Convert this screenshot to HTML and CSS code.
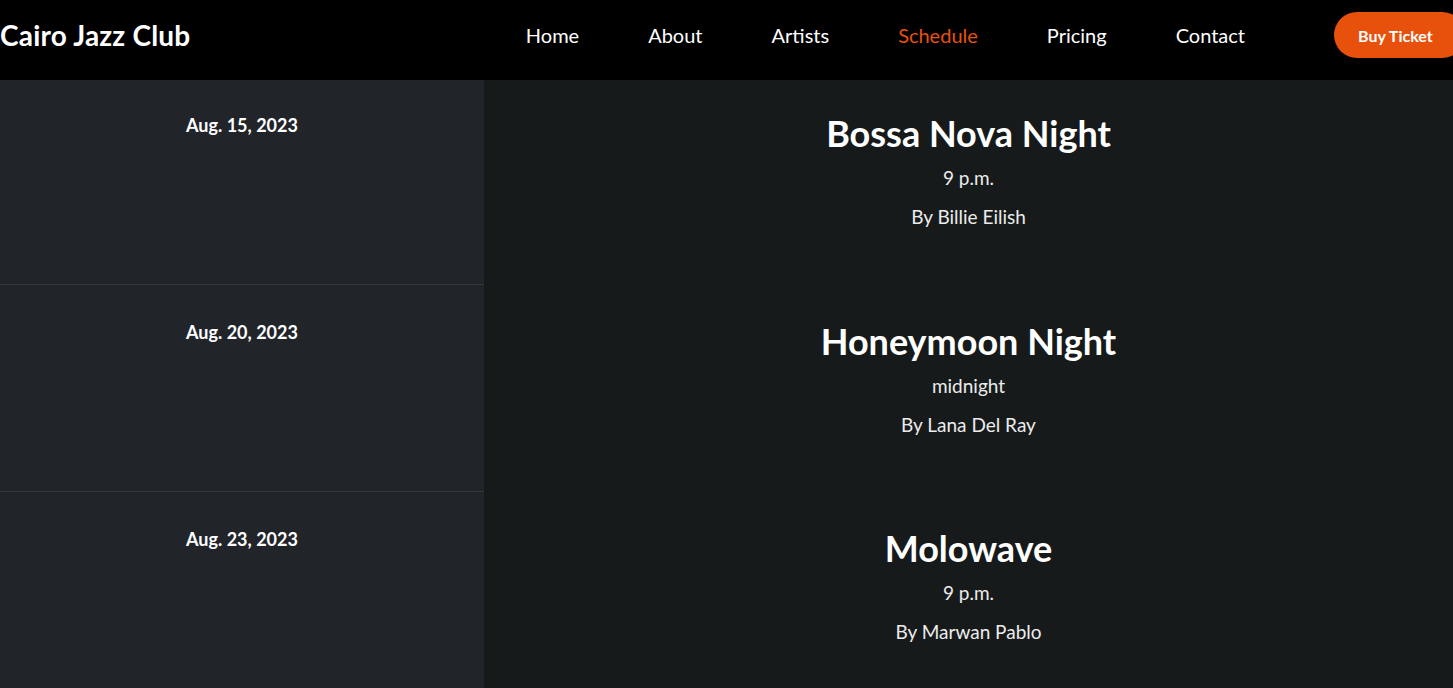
FILE: index.html
```html
<!DOCTYPE html>
<html lang="en">
<head>
<meta charset="utf-8">
<title>Cairo Jazz Club - Schedule</title>
<link rel="stylesheet" href="styles.css">
</head>
<body>
<header class="topbar">
  <a class="logo" href="#">Cairo Jazz Club</a>
  <nav class="nav">
    <a href="#">Home</a>
    <a href="#">About</a>
    <a href="#">Artists</a>
    <a href="#" class="active">Schedule</a>
    <a href="#">Pricing</a>
    <a href="#">Contact</a>
  </nav>
  <a class="btn" href="#">Buy Ticket</a>
</header>
<main class="schedule">
  <div class="row">
    <div class="date">Aug. 15, 2023</div>
    <div class="event">
      <h2>Bossa Nova Night</h2>
      <p class="time">9 p.m.</p>
      <p class="artist">By Billie Eilish</p>
    </div>
  </div>
  <div class="row">
    <div class="date">Aug. 20, 2023</div>
    <div class="event">
      <h2>Honeymoon Night</h2>
      <p class="time">midnight</p>
      <p class="artist">By Lana Del Ray</p>
    </div>
  </div>
  <div class="row">
    <div class="date">Aug. 23, 2023</div>
    <div class="event">
      <h2>Molowave</h2>
      <p class="time">9 p.m.</p>
      <p class="artist">By Marwan Pablo</p>
    </div>
  </div>
</main>
</body>
</html>
```
FILE: styles.css
```css
html, body {
  margin: 0;
  padding: 0;
  overflow: hidden;
  background: #161a1b;
  font-family: Lato, "Noto Sans", sans-serif;
  color: #fff;
}
a { text-decoration: none; color: inherit; }

.topbar {
  height: 80px;
  box-sizing: border-box;
  padding-bottom: 10px;
  background: #000;
  display: flex;
  align-items: center;
}
.logo {
  font-weight: 700;
  font-size: 28px;
  letter-spacing: 0.2px;
  color: #fff;
}
.nav {
  margin-left: auto;
  display: flex;
  gap: 69px;
  margin-right: 89px;
}
.nav a {
  font-size: 20px;
  color: #fff;
  line-height: 24px;
}
.nav a.active { color: #e8510b; }
.btn {
  flex: 0 0 auto;
  width: 131px;
  margin-right: -12px;
  height: 46px;
  border-radius: 23px;
  background: #e8510b;
  color: #fff;
  font-weight: 700;
  font-size: 16px;
  display: flex;
  align-items: center;
  padding-left: 24px;
  box-sizing: border-box;
}

.schedule { display: flex; flex-direction: column; }
.row {
  display: grid;
  grid-template-columns: 484px 1fr;
  height: 207px;
}
.row:first-child { height: 204px; }
.date {
  background: #212529;
  text-align: center;
  font-weight: 700;
  font-size: 18px;
  line-height: 20px;
  padding-top: 37px;
  border-top: 1px solid #33373a;
}
.row:first-child .date { padding-top: 35px; border-top: 0; }
.event {
  text-align: center;
  padding-top: 37px;
}
.row:first-child .event { padding-top: 33px; }
.event h2 {
  margin: 0;
  font-size: 36px;
  line-height: 40px;
  font-weight: 700;
}
.event p {
  margin: 0;
  font-size: 19px;
  line-height: 24px;
  color: #ececec;
}
.event .time { margin-top: 13px; }
.event .artist { margin-top: 15px; }
```
